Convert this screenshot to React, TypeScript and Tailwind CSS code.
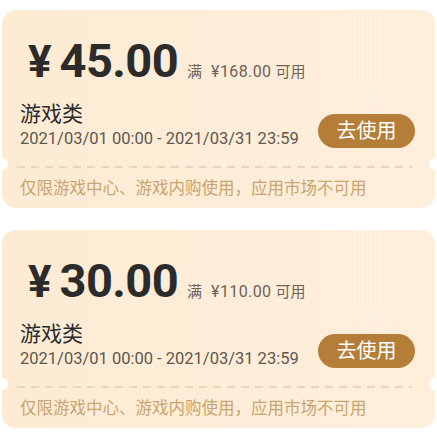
import React from 'react';

interface Coupon {
  amount: string;
  threshold: string;
  category: string;
  period: string;
  note: string;
}

const coupons: Coupon[] = [
  {
    amount: '45.00',
    threshold: '168.00',
    category: '游戏类',
    period: '2021/03/01 00:00 - 2021/03/31 23:59',
    note: '仅限游戏中心、游戏内购使用，应用市场不可用',
  },
  {
    amount: '30.00',
    threshold: '110.00',
    category: '游戏类',
    period: '2021/03/01 00:00 - 2021/03/31 23:59',
    note: '仅限游戏中心、游戏内购使用，应用市场不可用',
  },
];

const font = "font-['Roboto','Noto_Sans_CJK_SC',sans-serif]";

function Lines() {
  return (
    <svg className="absolute right-[48px] top-0" width="34" height="110" viewBox="0 0 34 110" fill="none">
      {[0, 4, 8, 12, 16, 20, 24].map((o) => (
        <path key={o} d={`M${o + 2} 0 V70 Q${o + 2} 100 ${o + 30} 110`} stroke="#fff7ec" strokeWidth="1" opacity="0.8" />
      ))}
    </svg>
  );
}

function CouponCard({ c }: { c: Coupon }) {
  return (
    <div className="relative mx-[2px] h-[198px] rounded-[14px] bg-gradient-to-r from-[#fdebd4] to-[#feeedb] overflow-hidden">
      <Lines />
      <div className="absolute -left-[6px] top-[148px] w-[12px] h-[12px] rounded-full bg-white" />
      <div className="absolute -right-[6px] top-[148px] w-[12px] h-[12px] rounded-full bg-white" />
      <div className="relative pl-[18px] pr-[20px] pt-[27px]">
        <div className="flex items-baseline">
          <span className="ml-[8px] text-[44px] leading-[47px] font-bold text-[#2b2b2b] mr-[8px]">¥</span>
          <span className="text-[47px] leading-[47px] font-bold text-[#2b2b2b] tracking-[-0.6px]">{c.amount}</span>
          <span className="ml-[9px] text-[15px] text-[#6b625a]">满</span>
          <span className="ml-[9px] text-[16px] tracking-[0.4px] text-[#6b625a]">¥{c.threshold}</span>
          <span className="ml-[4px] text-[15px] text-[#6b625a]">可用</span>
        </div>
        <div className="flex items-end justify-between mt-[15px]">
          <div>
            <div className="text-[21px] leading-[26px] text-[#2b2b2b]">{c.category}</div>
            <div className="text-[16.5px] leading-[22px] text-[#5e5750] mt-[1px]">{c.period}</div>
          </div>
          <div className="mb-[2px] w-[97px] h-[34px] rounded-full bg-[#b47e39] flex items-center justify-center text-white text-[20px]">
            去使用
          </div>
        </div>
        <div className="mt-[16px] h-[1.5px] mr-[3px] ml-[-3px] bg-[repeating-linear-gradient(90deg,#e8d5bc_0_8px,transparent_8px_14px)]" />
        <div className="mt-[10px] text-[16.5px] leading-[22px] text-[#c7a56e]">{c.note}</div>
      </div>
    </div>
  );
}

export default function App() {
  return (
    <div className={`w-[437px] h-[434px] bg-white pt-[10px] flex flex-col gap-[22px] overflow-hidden ${font}`}>
      {coupons.map((c, i) => (
        <CouponCard key={i} c={c} />
      ))}
    </div>
  );
}
